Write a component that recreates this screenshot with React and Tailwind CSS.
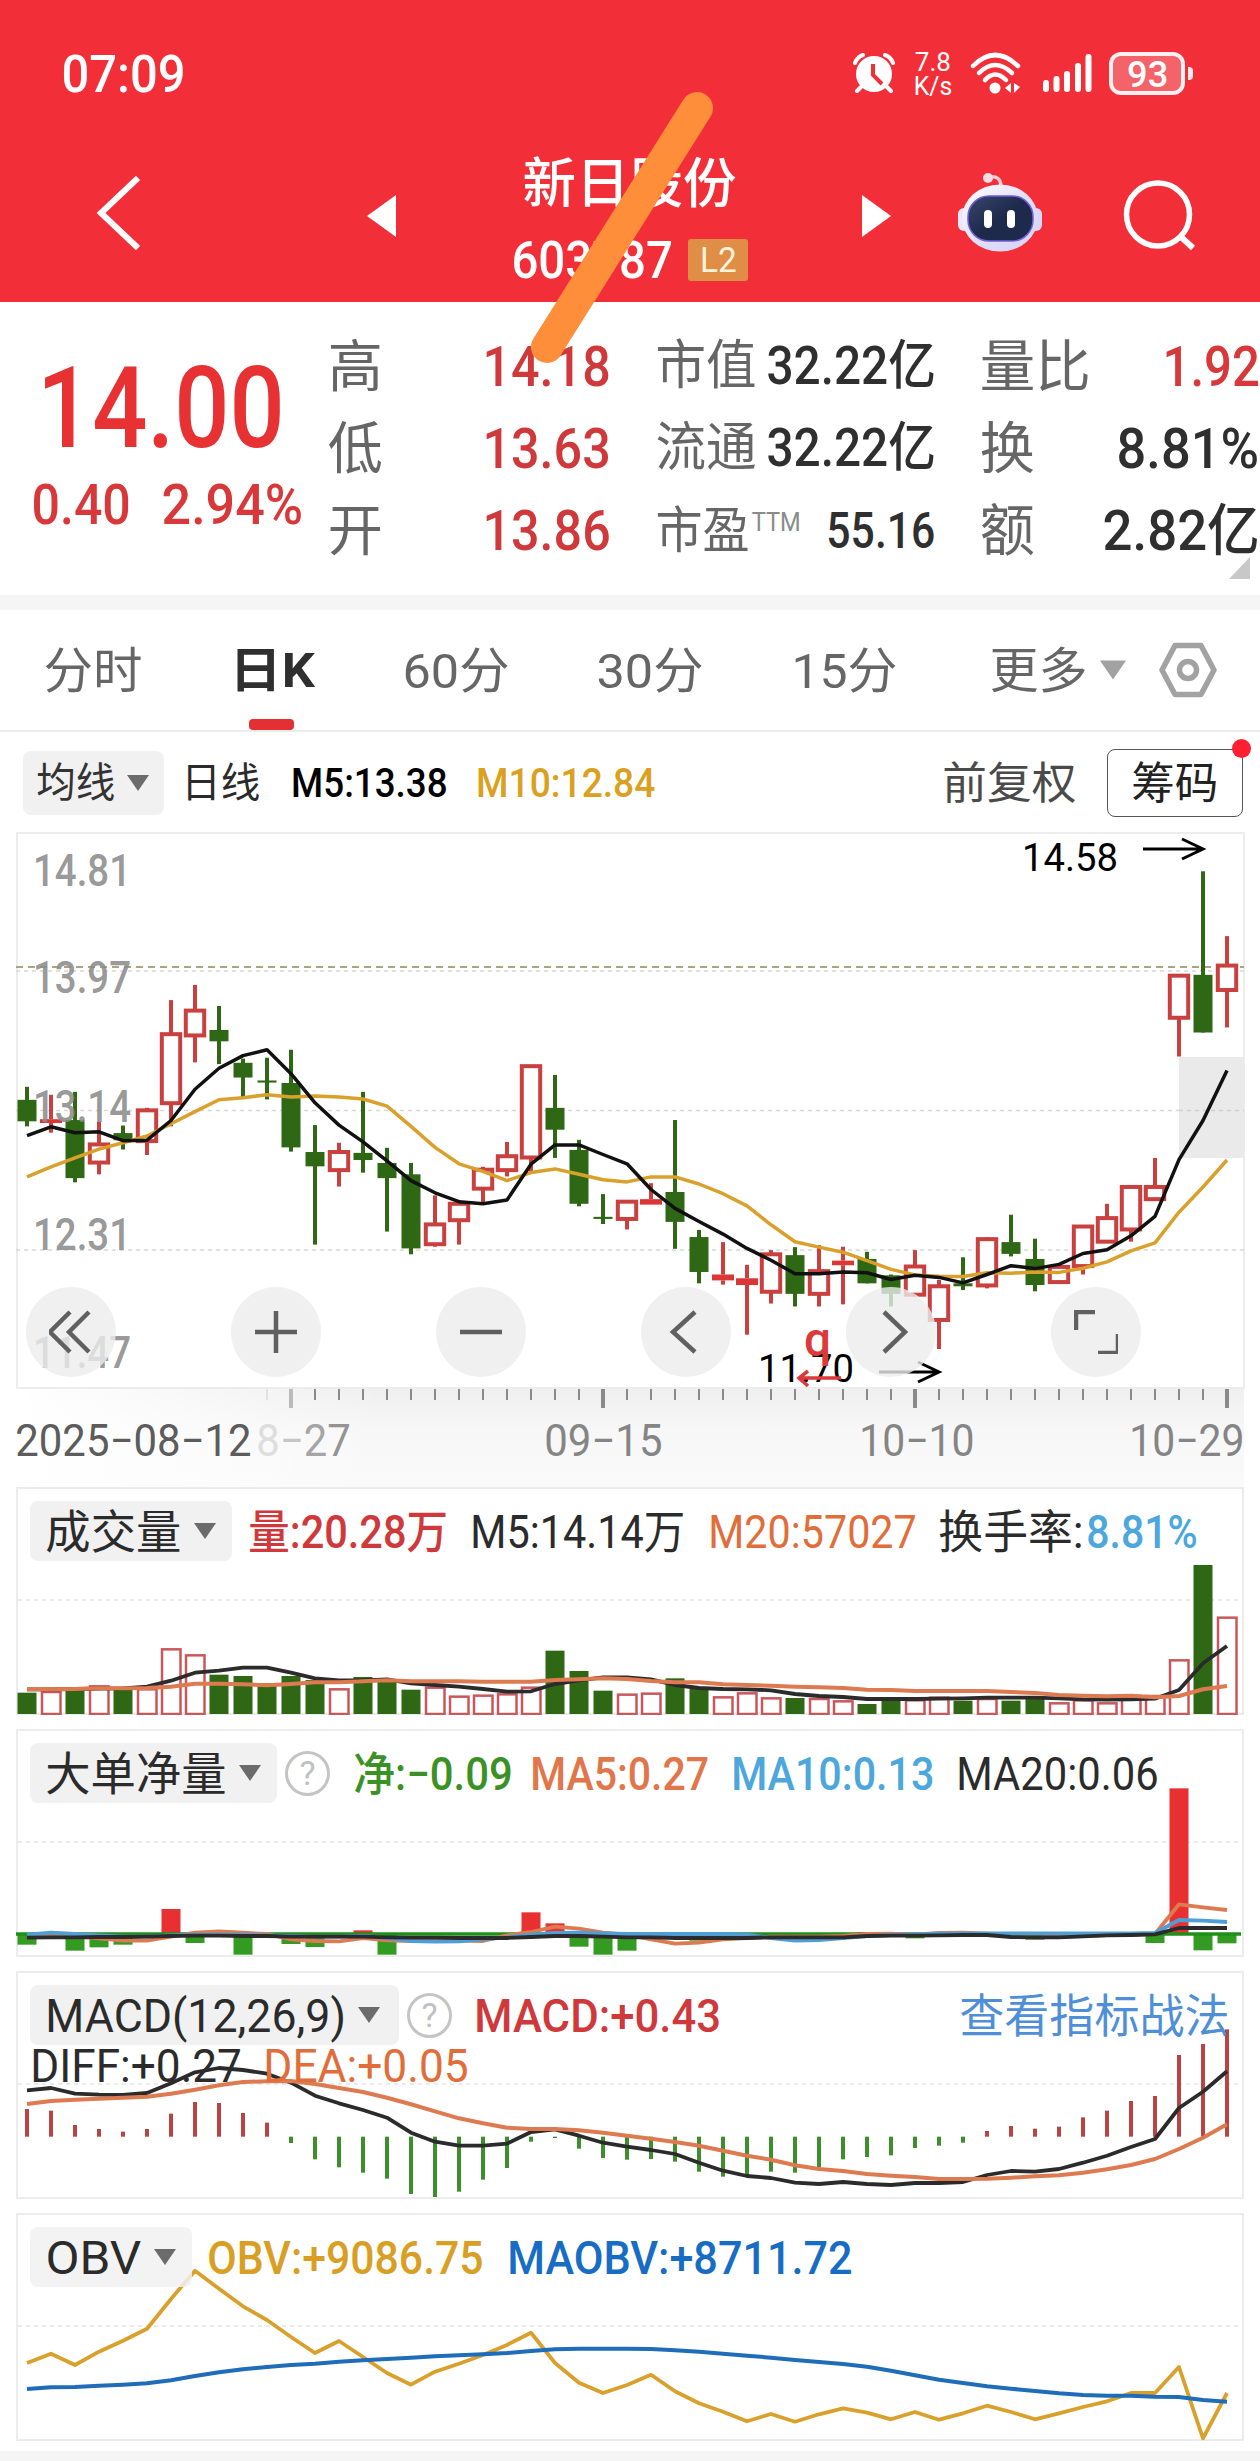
import React, { useLayoutEffect, useRef, useState } from 'react';
import clsx from 'clsx';

const RED = '#c9403f';
const GREEN = '#2f6815';
const BRIGHT_GREEN = '#339a22';
const ORANGE = '#dd7a50';
const GOLD = '#d9a02c';
const BLUE = '#1f6cb8';
const SKY = '#4f9fd6';
const INK = '#2b2b2b';

// [up, high, body top, body bottom, low]
const candles = [
  [0, 634, 665, 716, 728], [1, 653, 711, 720, 743], [0, 646, 713, 851, 861], [1, 717, 771, 814, 842],
  [0, 726, 744, 761, 783], [1, 684, 690, 763, 796], [1, 428, 509, 673, 728], [1, 392, 453, 512, 576],
  [0, 442, 499, 526, 580], [0, 567, 577, 612, 660], [0, 565, 619, 624, 664], [0, 546, 625, 778, 788],
  [0, 725, 789, 823, 1009], [1, 767, 789, 832, 871], [0, 646, 791, 808, 838], [0, 779, 815, 851, 978],
  [0, 815, 842, 1018, 1032], [1, 892, 961, 1008, 1014], [1, 903, 912, 951, 1009], [1, 824, 831, 876, 908],
  [1, 765, 799, 832, 847], [1, 584, 585, 802, 838], [0, 606, 684, 736, 803], [0, 760, 784, 912, 918],
  [0, 889, 943, 948, 960], [1, 905, 907, 948, 973], [1, 863, 901, 914, 914], [0, 713, 884, 955, 1019],
  [0, 974, 991, 1074, 1101], [1, 1003, 1080, 1094, 1104], [1, 1057, 1089, 1105, 1223], [1, 1022, 1032, 1121, 1149],
  [0, 1015, 1034, 1126, 1156], [1, 1010, 1072, 1126, 1156], [1, 1014, 1047, 1058, 1151], [0, 1026, 1043, 1101, 1101],
  [0, 1080, 1082, 1126, 1156], [1, 1022, 1061, 1128, 1132], [1, 1093, 1108, 1188, 1257], [0, 1039, 1101, 1108, 1117],
  [1, 992, 996, 1106, 1113], [0, 938, 1003, 1031, 1037], [0, 995, 1043, 1105, 1120], [1, 1058, 1062, 1098, 1102],
  [1, 963, 966, 1060, 1080], [1, 912, 946, 1002, 1004], [1, 870, 872, 973, 1002], [1, 803, 872, 901, 901],
  [1, 368, 370, 470, 562], [0, 122, 368, 505, 505], [1, 276, 346, 404, 493],
];

const ma5 = [750, 729, 743, 741, 762, 761, 714, 640, 590, 560, 546, 603, 672, 725, 765, 810, 857, 886, 907, 912, 903, 818, 772, 772, 795, 817, 878, 923, 954, 984, 1018, 1046, 1078, 1078, 1074, 1076, 1092, 1082, 1087, 1100, 1080, 1059, 1066, 1056, 1030, 1021, 988, 942, 807, 714, 595];
const ma10 = [848, 824, 803, 782, 767, 751, 722, 693, 665, 660, 653, 658, 656, 658, 663, 680, 728, 778, 817, 835, 857, 838, 829, 842, 855, 860, 848, 848, 865, 888, 917, 962, 1002, 1015, 1027, 1047, 1068, 1081, 1084, 1085, 1076, 1077, 1074, 1075, 1065, 1050, 1024, 1005, 932, 872, 808];

const volumes = [668, 663, 657, 646, 656, 655, 535, 553, 614, 618, 640, 618, 630, 655, 621, 632, 659, 650, 677, 674, 670, 650, 542, 603, 662, 671, 668, 625, 654, 679, 667, 682, 684, 684, 691, 702, 688, 688, 680, 692, 684, 692, 684, 697, 688, 697, 675, 675, 568, 285, 440];
const vol5 = [658, 658, 657, 656, 655, 650, 632, 608, 602, 593, 593, 608, 625, 631, 631, 628, 640, 645, 650, 657, 665, 664, 642, 631, 622, 622, 628, 645, 654, 657, 658, 661, 672, 678, 681, 687, 687, 687, 686, 685, 683, 683, 683, 685, 688, 689, 688, 686, 660, 580, 528];
const vol20 = [658, 658, 657, 655, 655, 654, 650, 641, 641, 643, 646, 642, 637, 637, 634, 631, 634, 634, 634, 635, 635, 635, 630, 628, 625, 627, 633, 637, 637, 643, 645, 647, 650, 652, 654, 659, 660, 663, 663, 663, 663, 666, 669, 675, 677, 679, 677, 682, 678, 658, 648];

const flows = { 0: 1424, 2: 1442, 3: 1432, 4: 1424, 6: 1317, 7: 1419, 9: 1454, 11: 1422, 12: 1431, 14: 1381, 15: 1454, 21: 1327, 22: 1360, 23: 1430, 24: 1454, 25: 1442, 28: 1412, 35: 1386, 37: 1405, 42: 1409, 47: 1419, 48: 955, 49: 1441, 50: 1420 };
const flow5 = [1398, 1398, 1400, 1405, 1412, 1412, 1400, 1388, 1384, 1388, 1392, 1408, 1413, 1414, 1404, 1411, 1413, 1412, 1412, 1413, 1396, 1386, 1370, 1376, 1388, 1394, 1408, 1421, 1418, 1408, 1404, 1400, 1400, 1400, 1398, 1392, 1391, 1394, 1389, 1388, 1391, 1398, 1402, 1400, 1398, 1395, 1394, 1392, 1303, 1312, 1320];
const flow10 = [1394, 1388, 1392, 1396, 1400, 1400, 1396, 1394, 1394, 1394, 1396, 1398, 1400, 1400, 1398, 1404, 1413, 1415, 1414, 1408, 1402, 1394, 1389, 1388, 1390, 1392, 1392, 1392, 1392, 1392, 1394, 1404, 1412, 1410, 1404, 1398, 1395, 1393, 1391, 1390, 1390, 1390, 1390, 1390, 1390, 1390, 1390, 1389, 1350, 1352, 1356];
const flow20 = [1403, 1402, 1402, 1401, 1401, 1400, 1398, 1397, 1397, 1398, 1398, 1400, 1400, 1400, 1400, 1402, 1403, 1403, 1404, 1404, 1404, 1401, 1398, 1398, 1400, 1402, 1402, 1404, 1404, 1404, 1404, 1402, 1402, 1402, 1402, 1398, 1397, 1397, 1396, 1395, 1395, 1401, 1402, 1402, 1399, 1396, 1395, 1393, 1374, 1374, 1374];

const macdBars = [447, 452, 495, 507, 515, 507, 461, 426, 429, 459, 488, 549, 598, 622, 638, 656, 702, 711, 695, 659, 624, 545, 534, 566, 594, 599, 597, 605, 635, 650, 645, 635, 638, 622, 598, 591, 586, 564, 557, 548, 513, 498, 506, 500, 472, 452, 423, 408, 285, 252, 208];
const diff = [391, 384, 401, 404, 405, 399, 370, 337, 324, 330, 341, 368, 407, 430, 450, 473, 518, 545, 557, 557, 551, 516, 508, 527, 548, 560, 570, 582, 608, 632, 648, 654, 668, 672, 666, 672, 675, 669, 669, 666, 645, 633, 635, 627, 608, 587, 561, 537, 444, 395, 334];
const dea = [432, 423, 419, 416, 413, 410, 401, 389, 376, 366, 364, 363, 372, 384, 396, 413, 433, 454, 475, 490, 503, 507, 507, 511, 518, 527, 536, 546, 557, 572, 587, 599, 616, 627, 633, 642, 647, 651, 657, 657, 656, 653, 649, 646, 638, 628, 615, 597, 567, 533, 493];

const obv = [1210, 1182, 1216, 1176, 1143, 1107, 1018, 933, 987, 1040, 1081, 1132, 1180, 1144, 1192, 1240, 1275, 1236, 1212, 1186, 1156, 1119, 1210, 1269, 1300, 1276, 1245, 1295, 1331, 1356, 1385, 1363, 1386, 1364, 1346, 1359, 1379, 1357, 1380, 1361, 1338, 1357, 1379, 1361, 1342, 1325, 1300, 1300, 1222, 1436, 1300];
const maobv = [1288, 1283, 1282, 1278, 1275, 1271, 1262, 1249, 1238, 1229, 1222, 1216, 1212, 1206, 1202, 1198, 1194, 1190, 1187, 1184, 1180, 1174, 1169, 1167, 1167, 1167, 1168, 1172, 1176, 1182, 1188, 1194, 1201, 1207, 1213, 1221, 1233, 1247, 1260, 1270, 1280, 1287, 1294, 1301, 1306, 1308, 1308, 1311, 1312, 1321, 1326];

// Charts are 1228px wide, one slot every 24px
const cx = (i) => 11 + i * 24;
const ky = (v) => (v - 31) / 2.376;

// Squeezes a line of text to a fixed width
const Fit = ({ w, className, children }) => {
  const ref = useRef(null);
  const [ratio, setRatio] = useState(1);

  useLayoutEffect(() => {
    if (ref.current) setRatio(w / ref.current.offsetWidth);
  }, [w]);

  return (
    <span className={clsx('block shrink-0 leading-none whitespace-nowrap', className)} style={{ width: w }}>
      <span ref={ref} className="block w-max origin-left px-[0.03em] pt-[0.06em]" style={{ transform: `scaleX(${ratio})` }}>
        {children}
      </span>
    </span>
  );
};

const Line = ({ data, y, color, width = 3.8 }) => (
  <polyline
    points={data.map((v, i) => `${cx(i)},${y(v).toFixed(1)}`).join(' ')}
    fill="none"
    stroke={color}
    strokeWidth={width}
    strokeLinejoin="round"
  />
);

const Caret = ({ className }) => (
  <svg viewBox="0 0 22 16" className={clsx('shrink-0', className)}>
    <path d="M0 0H22L11 16Z" fill="currentColor" />
  </svg>
);

const Pill = ({ w, className, children }) => (
  <div className={clsx('flex h-[60px] shrink-0 items-center rounded-lg bg-[#f1f1f1] pl-[14px] text-[46px] text-[#2b2b2b]', className)}>
    <Fit w={w}>{children}</Fit>
    <Caret className="ml-[11px] h-4 w-[22px] text-[#6b6b6b]" />
  </div>
);

const Help = () => (
  <div className="ml-2 flex size-[45px] shrink-0 items-center justify-center rounded-full border-3 border-[#c4c4c4] text-[34px] leading-none text-[#c0c0c0]">
    ?
  </div>
);

const Panel = ({ chart, children, second, className }) => (
  <section className={clsx('relative mx-4 h-[228px] border-2 border-[#ececec]', className)}>
    <svg viewBox="0 0 1228 228" className="absolute -top-0.5 -left-0.5 h-[228px] w-[1228px]">
      <path d="M2 113H1226" stroke="#e4e4e4" strokeWidth="1.5" strokeDasharray="4 4" />
      {chart}
    </svg>
    <div className="relative flex items-center pt-3 pl-3 text-[46px]">{children}</div>
    {second}
  </section>
);

const StatusBar = () => (
  <div className="flex h-[146px] items-center pl-[60px] text-white">
    <Fit w={127} className="text-[52px] font-medium">07:09</Fit>
    <svg viewBox="0 0 42 40" className="ml-[666px] h-10 w-[42px]">
      <circle cx="21" cy="21" r="18" fill="#fff" />
      <path d="M8 34L4 38M34 34L38 38M2 10Q4 4 10 2M40 10Q38 4 32 2" stroke="#fff" strokeWidth="4" strokeLinecap="round" fill="none" />
      <path d="M20 11V22L29 31" stroke="#f22f38" strokeWidth="4" fill="none" />
    </svg>
    <div className="ml-[18px] flex flex-col items-center">
      <Fit w={38} className="text-[26px]">7.8</Fit>
      <Fit w={40} className="-mt-[3px] text-[26px]">K/s</Fit>
    </div>
    <svg viewBox="0 0 52 42" className="ml-[17px] h-[42px] w-[52px]" fill="none" stroke="#fff" strokeWidth="4.5" strokeLinecap="round">
      <path d="M3 14Q25 -8 48 14" />
      <path d="M9 21Q25 5 42 21" />
      <path d="M15 28Q25 17 36 28" />
      <circle cx="25" cy="36" r="5.5" fill="#fff" stroke="none" />
      <path d="M41 31V41L35 36ZM44 31V41L50 35Z" fill="#fff" stroke="none" />
    </svg>
    <svg viewBox="0 0 52 40" className="ml-[20px] h-10 w-[52px]" stroke="#fff" strokeWidth="6" strokeLinecap="round">
      <path d="M4 30V36M14.500 26V36M25 21V36M36 13V36M46.500 4V36" />
    </svg>
    <div className="ml-[15px] flex h-[43px] w-[76px] items-center justify-center rounded-[12px] border-4 border-white/90 bg-white/25">
      <Fit w={43} className="text-[37px] font-medium">93</Fit>
    </div>
    <div className="ml-[3px] h-[13px] w-[5px] rounded-r bg-white/90" />
  </div>
);

const Robot = () => (
  <svg viewBox="0 0 86 80" className="mt-[27px] ml-[66px] h-20 w-[86px] shrink-0">
    <defs>
      <linearGradient id="shell" x1="0" y1="0" x2="1" y2="1">
        <stop offset="0" stopColor="#fff" />
        <stop offset="0.5" stopColor="#e3e0fb" />
        <stop offset="1" stopColor="#d3d0f5" />
      </linearGradient>
      <linearGradient id="visor" x1="0" y1="0" x2="1" y2="1">
        <stop offset="0" stopColor="#39456b" />
        <stop offset="0.5" stopColor="#1d2a4c" />
        <stop offset="1" stopColor="#1d2a4c" />
      </linearGradient>
    </defs>
    <path d="M32 4Q44 2 44 14" fill="none" stroke="#f6c9d6" strokeWidth="3.5" />
    <circle cx="31" cy="5" r="5" fill="#fbdbe2" />
    <rect x="1" y="35" width="16" height="23" rx="6" fill="#ece6fa" />
    <rect x="69" y="35" width="16" height="23" rx="6" fill="#dad6f6" />
    <ellipse cx="43" cy="45" rx="38" ry="33.5" fill="url(#shell)" />
    <rect x="11" y="23" width="65" height="45" rx="21" fill="url(#visor)" stroke="#6f5fd8" strokeWidth="1.500" />
    <rect x="27" y="37" width="8" height="18" rx="4" fill="#fff" />
    <rect x="50" y="37" width="8" height="18" rx="4" fill="#fff" />
  </svg>
);

const Header = () => (
  <header className="relative h-[302px] bg-[#f22f38]">
    <StatusBar />
    <div className="flex items-start text-white">
      <svg viewBox="0 0 44 76" className="mt-[29px] ml-[96px] h-[76px] w-11 shrink-0">
        <path d="M42 3L5 38L42 73" fill="none" stroke="#fff" strokeWidth="6" />
      </svg>
      <svg viewBox="0 0 29 42" className="mt-[49px] ml-[227px] h-[42px] w-[29px] shrink-0">
        <path d="M29 0V42L0 21Z" fill="#fff" />
      </svg>
      <div className="ml-[114px] w-[240px] shrink-0">
        <div className="flex h-[75px] items-center pl-[11px]">
          <Fit w={217} className="text-[54px] font-medium">新日股份</Fit>
        </div>
        <div className="flex h-[77px] items-center">
          <Fit w={164} className="text-[52px] font-medium">603787</Fit>
          <div className="ml-[14px] flex h-[42px] w-[60px] items-center justify-center rounded-[3px] bg-[#e08e46] text-[#fff3dc]">
            <Fit w={39} className="text-[35px]">L2</Fit>
          </div>
        </div>
      </div>
      <svg viewBox="0 0 29 42" className="mt-[49px] ml-[112px] h-[42px] w-[29px] shrink-0">
        <path d="M0 0V42L29 21Z" fill="#fff" />
      </svg>
      <Robot />
      <svg viewBox="0 0 74 72" className="mt-[33px] ml-[80px] h-[72px] w-[74px] shrink-0" fill="none" stroke="#fff" strokeWidth="5.500">
        <circle cx="35" cy="35.500" r="31.500" />
        <path d="M57 57L70 69" strokeWidth="6" />
      </svg>
    </div>
    {/* Marker stroke across the stock name */}
    <svg viewBox="0 0 220 290" className="absolute top-[80px] left-[510px] z-10 h-[290px] w-[220px]">
      <path d="M187 28L37 267" stroke="#ff8e3a" strokeWidth="32" strokeLinecap="round" />
    </svg>
  </header>
);

const Quote = () => (
  <section className="relative flex h-[293px] bg-white pt-[22px] text-[56px] font-medium text-[#2f2f2f]">
    <div className="w-[326px] shrink-0 pt-[20px] text-[#e73132]">
      <Fit w={254} className="ml-[34px] text-[114px]">14.00</Fit>
      <div className="mt-[9px] flex pl-[30px] text-[#d8383a]">
        <Fit w={102}>0.40</Fit>
        <Fit w={145} className="ml-[28px]">2.94%</Fit>
      </div>
    </div>
    <div className="w-[286px] shrink-0">
      {[['高', '14.18'], ['低', '13.63'], ['开', '13.86']].map(([label, value]) => (
        <div key={label} className="flex h-[82px] items-center justify-between">
          <Fit w={58} className="font-normal text-[#666]">{label}</Fit>
          <Fit w={131} className="text-[#d0393b]">{value}</Fit>
        </div>
      ))}
    </div>
    <div className="ml-[42px] w-[283px] shrink-0">
      {['市值', '流通'].map((label) => (
        <div key={label} className="flex h-[82px] items-center justify-between">
          <Fit w={104} className="text-[53px] font-normal text-[#666]">{label}</Fit>
          <Fit w={172} className="text-[53px]">32.22亿</Fit>
        </div>
      ))}
      <div className="flex h-[82px] items-center">
        <Fit w={97} className="text-[50px] font-normal text-[#666]">市盈</Fit>
        <Fit w={50} className="-mt-[16px] text-[26px] font-normal text-[#8a8a8a]">TTM</Fit>
        <Fit w={112} className="ml-[24px] text-[50px]">55.16</Fit>
      </div>
    </div>
    <div className="ml-[41px] w-[283px] shrink-0">
      <div className="flex h-[82px] items-center justify-between">
        <Fit w={114} className="font-normal text-[#666]">量比</Fit>
        <Fit w={100} className="text-[#d8383a]">1.92</Fit>
      </div>
      <div className="flex h-[82px] items-center justify-between">
        <Fit w={58} className="font-normal text-[#666]">换</Fit>
        <Fit w={146}>8.81%</Fit>
      </div>
      <div className="flex h-[82px] items-center justify-between">
        <Fit w={58} className="font-normal text-[#666]">额</Fit>
        <Fit w={160}>2.82亿</Fit>
      </div>
    </div>
    <svg viewBox="0 0 21 22" className="absolute right-[10px] bottom-[16px] h-[22px] w-[21px]">
      <path d="M21 0V22H0Z" fill="#c8c8c8" />
    </svg>
  </section>
);

const Tabs = () => (
  <nav className="flex h-[122px] items-center border-b-2 border-[#ececec] bg-white text-[49px] text-[#666]">
    <Fit w={102} className="ml-[42px]">分时</Fit>
    <div className="relative ml-[84px] flex h-full items-center text-[#2f2f2f]">
      <Fit w={88} className="text-[48px] font-bold">日K</Fit>
      <div className="absolute bottom-0 left-[21px] h-[11px] w-[45px] rounded-[4px] bg-[#e53033]" />
    </div>
    <Fit w={110} className="ml-[85px]">60分</Fit>
    <Fit w={110} className="ml-[84px]">30分</Fit>
    <Fit w={109} className="ml-[85px]">15分</Fit>
    <Fit w={101} className="ml-[89px]">更多</Fit>
    <Caret className="ml-[11px] h-[22px] w-[26px] text-[#a2a2a2]" />
    <svg viewBox="0 0 58 56" className="ml-[33px] h-14 w-[58px]" fill="none" stroke="#a2a2a2" strokeWidth="5.500" strokeLinejoin="round">
      <path d="M16 3.500H42L55 28L42 52.500H16L3 28Z" />
      <circle cx="29" cy="28" r="8.500" />
    </svg>
  </nav>
);

const AverageBar = () => (
  <div className="flex h-[101px] items-center bg-white text-[40px]">
    <div className="ml-[23px] flex h-[64px] w-[141px] items-center rounded-lg bg-[#f1f1f1] pl-3 text-[#333]">
      <Fit w={81} className="text-[41px]">均线</Fit>
      <Caret className="ml-[11px] h-4 w-[22px] text-[#6b6b6b]" />
    </div>
    <Fit w={81} className="ml-[16px] text-[41px] text-[#2b2b2b]">日线</Fit>
    <Fit w={159} className="ml-[29px] font-medium text-black">M5:13.38</Fit>
    <Fit w={181} className="ml-[26px] font-medium text-[#dba020]">M10:12.84</Fit>
    <Fit w={137} className="ml-[285px] text-[44px] text-[#4a4a4a]">前复权</Fit>
    <div className="relative ml-[29px] flex h-[68px] w-[136px] items-center justify-center rounded-lg border border-[#555] text-[#222]">
      <Fit w={90} className="text-[44px]">筹码</Fit>
      <div className="absolute -top-[11px] -right-[9px] size-[19px] rounded-full bg-[#ff1f33]" />
    </div>
  </div>
);

const ControlIcon = ({ d }) => (
  <div className="flex size-[90px] items-center justify-center rounded-full bg-[#ececec]/80">
    <svg viewBox="-22 -22 44 44" className="size-11" fill="none" stroke="#606060" strokeWidth="4.500">
      <path d={d} />
    </svg>
  </div>
);

const controls = [
  'M-1 -20L-21 0L-1 20M18 -20L-2 0L18 20',
  'M-21 0H21M0 -21V21',
  'M-21 0H21',
  'M9 -20L-13 0L9 20',
  'M-7 -20L14 0L-7 20',
  'M-20 -2V-20H-1M22 2V21H2',
];

const PriceChart = () => (
  <section className="relative mx-4 h-[556px]">
    <svg viewBox="0 0 1228 556" className="block h-[556px] w-[1228px] overflow-visible">
      <rect x="1" y="0" width="1227" height="555" fill="#fff" stroke="#ececec" strokeWidth="2" />
      {[138, 277.5, 417].map((y) => (
        <path key={y} d={`M0 ${y}H1228`} stroke="#d8d8d8" strokeWidth="1.500" strokeDasharray="4 4" />
      ))}
      <path d="M0 134H1228" stroke="#aaa57c" strokeWidth="2" strokeDasharray="7 5" />
      <rect x="1163" y="224" width="65" height="101" fill="#eaeaea" />
      <path d="M1163 277.500H1228" stroke="#d0d0d0" strokeWidth="1.500" strokeDasharray="4 4" />

      {candles.map(([up, high, top, bottom, low], i) => {
        const x = cx(i);
        const h = ky(bottom) - ky(top);
        if (!up) {
          return (
            <g key={i} fill={GREEN}>
              <rect x={x - 2} y={ky(high)} width="4" height={ky(low) - ky(high)} />
              <rect x={x - 9.5} y={ky(top)} width="19" height={h} />
            </g>
          );
        }
        return (
          <g key={i} fill={RED}>
            <rect x={x - 2} y={ky(high)} width="4" height={Math.max(ky(top) - ky(high), 0)} />
            <rect x={x - 2} y={ky(bottom)} width="4" height={Math.max(ky(low) - ky(bottom), 0)} />
            {h < 8 ? (
              <rect x={x - 11} y={ky(top)} width="22" height={h} fill="#dc3535" />
            ) : (
              <rect x={x - 9.2} y={ky(top)} width="18.4" height={h} fill="#fff" stroke={RED} strokeWidth="4" />
            )}
          </g>
        );
      })}

      <g fontSize="44" fontWeight="500" fill="#8c8c8c" fillOpacity="0.9">
        {[['14.81', 53], ['13.97', 160], ['13.14', 289], ['12.31', 417], ['11.47', 535]].map(([t, y]) => (
          <text key={t} x="17" y={y} textLength="98" lengthAdjust="spacingAndGlyphs">{t}</text>
        ))}
      </g>

      <Line data={ma10} y={ky} color={GOLD} width={3.5} />
      <Line data={ma5} y={ky} color="#111" width={3.5} />

      <g fontSize="39" fill="#000">
        <text x="1006" y="38" textLength="96" lengthAdjust="spacingAndGlyphs">14.58</text>
        <text x="742" y="549" textLength="96" lengthAdjust="spacingAndGlyphs">11.70</text>
      </g>
      <g fill="none" stroke="#000" strokeWidth="3">
        <path d="M1127 16H1186M1166 6L1187 16L1166 26" />
        <path d="M863 539H922M902 529L923 539L902 549" />
      </g>
      <text x="788" y="523" fontSize="48" fontWeight="500" fill="#dc3a3a">q</text>
      <path d="M825 545H784M792 538L783 545L792 553" fill="none" stroke="#dc3a3a" strokeWidth="3.5" />
    </svg>
    <div className="absolute top-[454px] left-[10px] flex gap-[115px]">
      {controls.map((d) => (
        <ControlIcon key={d} d={d} />
      ))}
    </div>
  </section>
);

const DateAxis = () => (
  <div className="mx-4 h-[98px] bg-[linear-gradient(to_right,#fff,transparent_30%),linear-gradient(#efefef,#f7f7f7_40%,#fafafa)]">
    <svg viewBox="0 0 1228 24" className="block h-6 w-[1228px]">
      {candles.slice(10).map((_, n) => {
        const i = n + 10;
        const major = i % 13 === 11;
        return (
          <rect
            key={i}
            x={cx(i) - (major ? 2 : 1)}
            y="0"
            width={major ? 4 : 2}
            height={major ? 19 : 11}
            fill={i < 11 ? '#e2e2e2' : i === 11 ? '#bbb' : '#8a8a8a'}
          />
        );
      })}
    </svg>
    <div className="flex pt-[3px] text-[44px] text-[#858585]">
      <Fit w={239} className="-ml-[2px] text-[#5c5c5c]">2025−08−12</Fit>
      <Fit w={97} className="ml-[2px]">
        <span className="text-[#dedede]">8</span>
        <span className="text-[#c6c6c6]">−</span>
        <span className="text-[#a5a5a5]">2</span>
        <span className="text-[#949494]">7</span>
      </Fit>
      <Fit w={121} className="ml-[191px]">09−15</Fit>
      <Fit w={118} className="ml-[194px]">10−10</Fit>
      <Fit w={118} className="ml-[152px]">10−29</Fit>
    </div>
  </div>
);

const VolumePanel = () => {
  const y = (v) => (v - 51) / 3;
  const chart = (
    <>
      {volumes.map((v, i) =>
        candles[i][0] ? (
          <rect key={i} x={cx(i) - 9} y={y(v) + 1} width="18.500" height={227 - y(v) - 1} fill="#fff" stroke="#c9575c" strokeWidth="2.500" />
        ) : (
          <rect key={i} x={cx(i) - 9.5} y={y(v)} width="19" height={227 - y(v)} fill={GREEN} />
        )
      )}
      <Line data={vol5} y={y} color={INK} />
      <Line data={vol20} y={y} color={ORANGE} width={4} />
    </>
  );
  return (
    <Panel chart={chart}>
      <Pill w={139} className="w-[202px]">成交量</Pill>
      <Fit w={202} className="ml-[15px] font-medium text-[#d0393b]">量:20.28万</Fit>
      <Fit w={217} className="ml-[20px] text-[#2b2b2b]">M5:14.14万</Fit>
      <Fit w={211} className="ml-[21px] text-[#e06d3a]">M20:57027</Fit>
      <Fit w={148} className="ml-[19px] text-[#2b2b2b]">换手率:</Fit>
      <Fit w={114} className="font-medium text-[#4ba7dc]">8.81%</Fit>
    </Panel>
  );
};

const FlowPanel = () => {
  const y = (v) => (v - 777) / 3;
  const base = y(1392);
  const chart = (
    <>
      {Object.entries(flows).map(([i, v]) => {
        const end = y(v);
        return (
          <rect
            key={i}
            x={cx(Number(i)) - 9.5}
            y={Math.min(base, end)}
            width="19"
            height={Math.abs(end - base)}
            fill={end < base ? '#e83031' : BRIGHT_GREEN}
          />
        );
      })}
      <path d={`M0 ${base}H1225`} stroke="#1f8f1a" strokeWidth="3.500" />
      <Line data={flow5} y={y} color={ORANGE} />
      <Line data={flow10} y={y} color={SKY} />
      <Line data={flow20} y={y} color={INK} />
    </>
  );
  return (
    <Panel chart={chart} className="mt-[14px]">
      <Pill w={184} className="w-[247px]">大单净量</Pill>
      <Help />
      <Fit w={162} className="ml-[22px] font-medium text-[#3a9226]">净:−0.09</Fit>
      <Fit w={181} className="ml-[15px] font-medium text-[#e0764a]">MA5:0.27</Fit>
      <Fit w={206} className="ml-[20px] font-medium text-[#4ba7dc]">MA10:0.13</Fit>
      <Fit w={205} className="ml-[19px] text-[#2b2b2b]">MA20:0.06</Fit>
    </Panel>
  );
};

const MacdPanel = () => {
  const y = (v) => (v - 33) / 3;
  const base = y(530);
  const chart = (
    <>
      {macdBars.map((v, i) => (
        <path key={i} d={`M${cx(i)} ${base}V${y(v)}`} stroke={v < 530 ? '#b94444' : '#3d8f2c'} strokeWidth="4" />
      ))}
      <Line data={diff} y={y} color={INK} />
      <Line data={dea} y={y} color={ORANGE} width={4} />
    </>
  );
  const second = (
    <div className="relative -mt-[5px] flex pl-[11px] text-[46px]">
      <Fit w={214} className="text-[#2b2b2b]">DIFF:+0.27</Fit>
      <Fit w={208} className="ml-[19px] text-[#e06d3a]">DEA:+0.05</Fit>
    </div>
  );
  return (
    <Panel chart={chart} second={second} className="mt-[14px]">
      <Pill w={303} className="w-[369px]">MACD(12,26,9)</Pill>
      <Help />
      <Fit w={250} className="ml-[21px] font-medium text-[#d0393b]">MACD:+0.43</Fit>
      <Fit w={273} className="ml-[235px] text-[#4f8fd8]">查看指标战法</Fit>
    </Panel>
  );
};

const ObvPanel = () => {
  const y = (v) => (v - 760) / 3;
  const chart = (
    <>
      <Line data={obv} y={y} color={GOLD} />
      <Line data={maobv} y={y} color={BLUE} width={4} />
    </>
  );
  return (
    <Panel chart={chart} className="mt-[14px]">
      <Pill w={99} className="w-[162px] bg-[#f1f1f1]/85">OBV</Pill>
      <Fit w={279} className="ml-[14px] font-medium text-[#d99f24]">OBV:+9086.75</Fit>
      <Fit w={348} className="ml-[21px] font-medium text-[#176cc4]">MAOBV:+8711.72</Fit>
    </Panel>
  );
};

const App = () => {
  return (
    <div className="w-[1260px] overflow-hidden bg-white font-['Roboto','Noto_Sans_CJK_SC',sans-serif]">
      <Header />
      <Quote />
      <div className="h-[15px] bg-[#f5f5f5]" />
      <Tabs />
      <AverageBar />
      <PriceChart />
      <DateAxis />
      <VolumePanel />
      <FlowPanel />
      <MacdPanel />
      <ObvPanel />
      <div className="mt-[10px] h-[10px] bg-[#f5f5f5]" />
    </div>
  );
};

export default App;
